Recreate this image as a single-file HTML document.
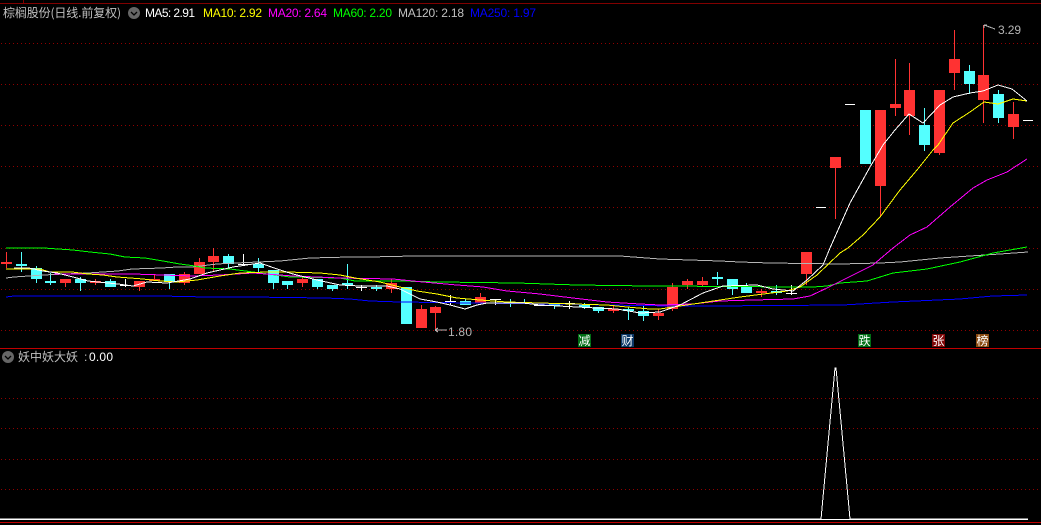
<!DOCTYPE html>
<html lang="zh">
<head>
<meta charset="utf-8">
<title>棕榈股份</title>
<style>
html,body{margin:0;padding:0;background:#000;width:1041px;height:525px;overflow:hidden}
svg{display:block;position:absolute;left:0;top:0}
text{font-family:"Liberation Sans","WenQuanYi Zen Hei",sans-serif;font-size:12px}
.cn{font-family:"WenQuanYi Zen Hei","Noto Sans CJK SC",sans-serif}
polyline{fill:none;stroke-width:1;shape-rendering:crispEdges}
.c{shape-rendering:crispEdges}
.g{stroke:#900000;stroke-width:1;stroke-dasharray:1 3;shape-rendering:crispEdges}
</style>
</head>
<body>
<svg width="1041" height="525" viewBox="0 0 1041 525" xmlns="http://www.w3.org/2000/svg">
<rect width="1041" height="525" fill="#000"/>
<!-- frame -->
<g class="c">
<rect x="0" y="3" width="1041" height="1" fill="#800000"/>
<rect x="23" y="0" width="1" height="3" fill="#800000"/>
<rect x="0" y="348" width="1041" height="1" fill="#c00000"/>
<rect x="0" y="522" width="1041" height="1" fill="#c00000"/>
</g>
<!-- grid -->
<path class="g" d="M1 43.5H1040M1 84.5H1040M1 125.5H1040M1 166.5H1040M1 207.5H1040M1 248.5H1040M1 289.5H1040M1 330.5H1040M1 398.5H1040M1 428.5H1040M1 459.5H1040M1 489.5H1040"/>
<!-- red candles -->
<path class="c" fill="#ff3232" d="M1 262h11v2h-11zM6 252h1v16h-1z
M60 279h11v4h-11zM65 279h1v8h-1z
M90 281h11v2h-11zM95 279h1v6h-1z
M134 281h11v6h-11zM139 281h1v10h-1z
M149 279h11v2h-11zM154 274h1v7h-1z
M179 274h11v9h-11zM184 272h1v13h-1z
M194 262h11v12h-11zM199 258h1v16h-1z
M208 256h11v6h-11zM213 248h1v23h-1z
M297 279h11v4h-11zM302 277h1v10h-1z
M386 283h11v6h-11zM391 279h1v14h-1z
M416 309h11v19h-11zM421 305h1v23h-1z
M430 307h11v6h-11zM435 306h1v24h-1z
M475 297h11v6h-11zM480 293h1v10h-1z
M608 309h11v2h-11zM613 306h1v7h-1z
M653 313h11v3h-11zM658 309h1v11h-1z
M667 287h11v22h-11zM672 283h1v28h-1z
M682 281h11v4h-11zM687 279h1v10h-1z
M697 281h11v4h-11zM702 277h1v10h-1z
M756 291h11v2h-11zM761 289h1v8h-1z
M801 252h11v22h-11zM806 252h1v33h-1z
M830 157h11v11h-11zM835 157h1v62h-1z
M875 110h11v76h-11zM880 110h1v106h-1z
M890 104h11v4h-11zM895 59h1v57h-1z
M904 90h11v26h-11zM909 63h1v72h-1z
M934 90h11v63h-11zM939 90h1v65h-1z
M949 59h11v14h-11zM954 30h1v60h-1z
M978 75h11v25h-11zM983 25h1v98h-1z
M1008 114h11v13h-11zM1013 102h1v37h-1z"/>
<!-- cyan candles -->
<path class="c" fill="#54ffff" d="M16 264h11v2h-11zM21 252h1v20h-1z
M31 268h11v11h-11zM36 266h1v17h-1z
M45 281h11v2h-11zM50 273h1v12h-1z
M75 279h11v4h-11zM80 277h1v14h-1z
M105 281h11v6h-11zM110 279h1v8h-1z
M164 274h11v8h-11zM169 274h1v15h-1z
M223 256h11v8h-11zM228 254h1v14h-1z
M253 264h11v4h-11zM258 258h1v14h-1z
M268 270h11v13h-11zM273 270h1v19h-1z
M282 281h11v4h-11zM287 281h1v8h-1z
M312 279h11v8h-11zM317 279h1v10h-1z
M327 285h11v4h-11zM332 285h1v6h-1z
M342 283h11v2h-11zM347 264h1v25h-1z
M371 287h11v2h-11zM376 285h1v6h-1z
M401 287h11v37h-11z
M460 301h11v4h-11zM465 299h1v6h-1z
M505 302h11v2h-11zM510 299h1v8h-1z
M519 302h11v2h-11zM524 299h1v5h-1z
M549 304h11v2h-11zM554 304h1v5h-1z
M579 305h11v2h-11zM584 303h1v6h-1z
M593 307h11v4h-11zM598 307h1v6h-1z
M623 309h11v2h-11zM628 307h1v13h-1z
M638 311h11v5h-11zM643 305h1v16h-1z
M712 277h11v2h-11zM717 272h1v13h-1z
M727 279h11v10h-11zM732 279h1v16h-1z
M741 287h11v6h-11zM746 283h1v10h-1z
M771 291h11v2h-11zM776 285h1v10h-1z
M860 110h11v54h-11z
M919 125h11v20h-11zM924 108h1v43h-1z
M964 71h11v13h-11zM969 65h1v29h-1z
M993 94h11v24h-11zM998 90h1v33h-1z"/>
<!-- white doji -->
<path class="c" fill="#fff" d="M120 285h11v1h-11zM125 279h1v8h-1z
M238 264h11v1h-11zM243 254h1v12h-1z
M356 287h11v1h-11zM361 285h1v6h-1z
M445 301h11v1h-11zM450 295h1v10h-1z
M490 299h11v1h-11zM495 299h1v6h-1z
M534 305h11v1h-11z
M564 303h11v1h-11zM569 301h1v8h-1z
M786 293h11v1h-11zM791 285h1v10h-1z
M816 207h10v1h-10z
M845 104h10v1h-10z
M1023 120h10v1h-10z"/>
<!-- MA lines -->
<polyline stroke="#0000ff" points="6,297 14,296 160,296 207,297 250,297 325,298 350,299 370,301 400,302 473,303 560,304 607,305 673,306 710,306 843,305 893,302 960,299 993,296 1027,295"/>
<polyline stroke="#b4b4b4" points="6,278 14,277 29,276 43,275 88,273 118,271 132,269 162,268 177,267 192,267 217,264 236,263 280,261 310,258 350,257 369,257 414,256 620,256 660,259 690,260 720,261 740,262 770,263 840,264 880,263 900,262 920,260 940,258 970,256 1000,254 1028,252"/>
<polyline stroke="#00ff00" points="6,248 44,248 58,249 73,250 90,252 110,254 125,257 145,258 163,261 180,264 195,266 205,268 230,269 253,272 290,277 340,278 355,281 400,281 440,282 517,283 547,284 577,285 650,286 665,286 793,287 813,287 827,286 840,283 867,281 893,273 927,269 960,262 993,253 1027,247"/>
<polyline stroke="#ff00ff" points="54,274 70,274 133,274 163,275 193,276 220,275 253,273 293,276 340,278 393,279 423,282 457,285 483,287 507,291 540,294 573,298 607,302 640,304 660,305 693,304 720,301 753,300 793,299 810,296 827,288 847,278 873,265 893,248 910,235 927,227 950,207 973,188 987,180 1007,172 1027,159"/>
<polyline stroke="#ffff00" points="6,269 40,269 50,272 72,272 88,274 103,275 117,277 143,279 160,281 177,282 197,280 220,276 240,273 267,272 287,272 320,273 340,275 355,278 380,282 400,287 417,291 437,294 457,298 480,300 507,302 540,303 607,305 627,307 650,309 660,309 680,306 700,303 740,297 787,291 800,287 817,275 840,253 848,248 863,235 880,217 900,190 917,170 933,150 938,145 953,123 970,112 984,102 998,104 1013,99 1027,101"/>
<polyline stroke="#ffffff" points="14,268 29,268 43,271 57,273 73,277 88,281 118,284 133,286 147,282 167,283 190,279 207,273 233,267 260,263 280,270 293,274 317,280 340,285 360,286 387,286 400,289 420,299 437,302 450,305 465,309 477,305 487,303 523,303 540,305 577,307 617,309 640,313 660,312 680,305 703,293 723,286 757,285 773,289 793,291 807,280 823,265 830,248 850,203 870,167 883,145 895,130 909,114 923,123 940,105 953,97 970,93 983,91 998,85 1012,89 1027,101"/>
<!-- lower panel -->
<polyline stroke="#ffffff" stroke-width="1" points="0,519 821,519 835,368 836,368 850,519 1028,519"/>
<rect class="c" x="0" y="519" width="1028" height="1" fill="#fff"/>
<!-- annotations -->
<path d="M435 330H447M435 330l3-2M435 330l3 2" stroke="#b4b4b4" fill="none" class="c"/>
<text x="448" y="336" fill="#b4b4b4" textLength="24">1.80</text>
<path d="M984 25l11 4M984 25h3M984 25v3" stroke="#b4b4b4" fill="none" class="c"/>
<text x="998" y="34" fill="#b4b4b4" textLength="23">3.29</text>
<!-- tags -->
<rect class="c" x="578" y="334" width="13" height="13" fill="#006e14"/>
<text class="cn" x="578.5" y="345" fill="#fff">减</text>
<rect class="c" x="621" y="334" width="13" height="13" fill="#0c3868"/>
<text class="cn" x="621.5" y="345" fill="#fff">财</text>
<rect class="c" x="858" y="334" width="13" height="13" fill="#006e14"/>
<text class="cn" x="858.5" y="345" fill="#fff">跌</text>
<rect class="c" x="932" y="334" width="13" height="13" fill="#800808"/>
<text class="cn" x="932.5" y="345" fill="#fff">张</text>
<rect class="c" x="976" y="334" width="13" height="13" fill="#8a4a10"/>
<text class="cn" x="976.5" y="345" fill="#fff">榜</text>
<!-- header -->
<text class="cn" x="3" y="17" fill="#c0c0c0" textLength="118">棕榈股份(日线.前复权)</text>
<circle cx="134" cy="13" r="6" fill="#666"/>
<path d="M131 12l3 3 3-3" stroke="#000" stroke-width="1.3" fill="none"/>
<text x="145" y="17" fill="#ffffff" textLength="50">MA5: 2.91</text>
<text x="203" y="17" fill="#ffff00" textLength="59">MA10: 2.92</text>
<text x="268" y="17" fill="#ff00ff" textLength="59">MA20: 2.64</text>
<text x="333" y="17" fill="#00ff00" textLength="59">MA60: 2.20</text>
<text x="398" y="17" fill="#c0c0c0" textLength="66">MA120: 2.18</text>
<text x="470" y="17" fill="#0000ff" textLength="66">MA250: 1.97</text>
<circle cx="8" cy="357" r="6" fill="#666"/>
<path d="M5 356l3 3 3-3" stroke="#000" stroke-width="1.3" fill="none"/>
<text class="cn" x="18" y="361" fill="#c0c0c0" textLength="60">妖中妖大妖</text>
<text x="84" y="361" fill="#c0c0c0">:</text>
<text x="89" y="361" fill="#ffffff" textLength="24">0.00</text>
</svg>
</body>
</html>
